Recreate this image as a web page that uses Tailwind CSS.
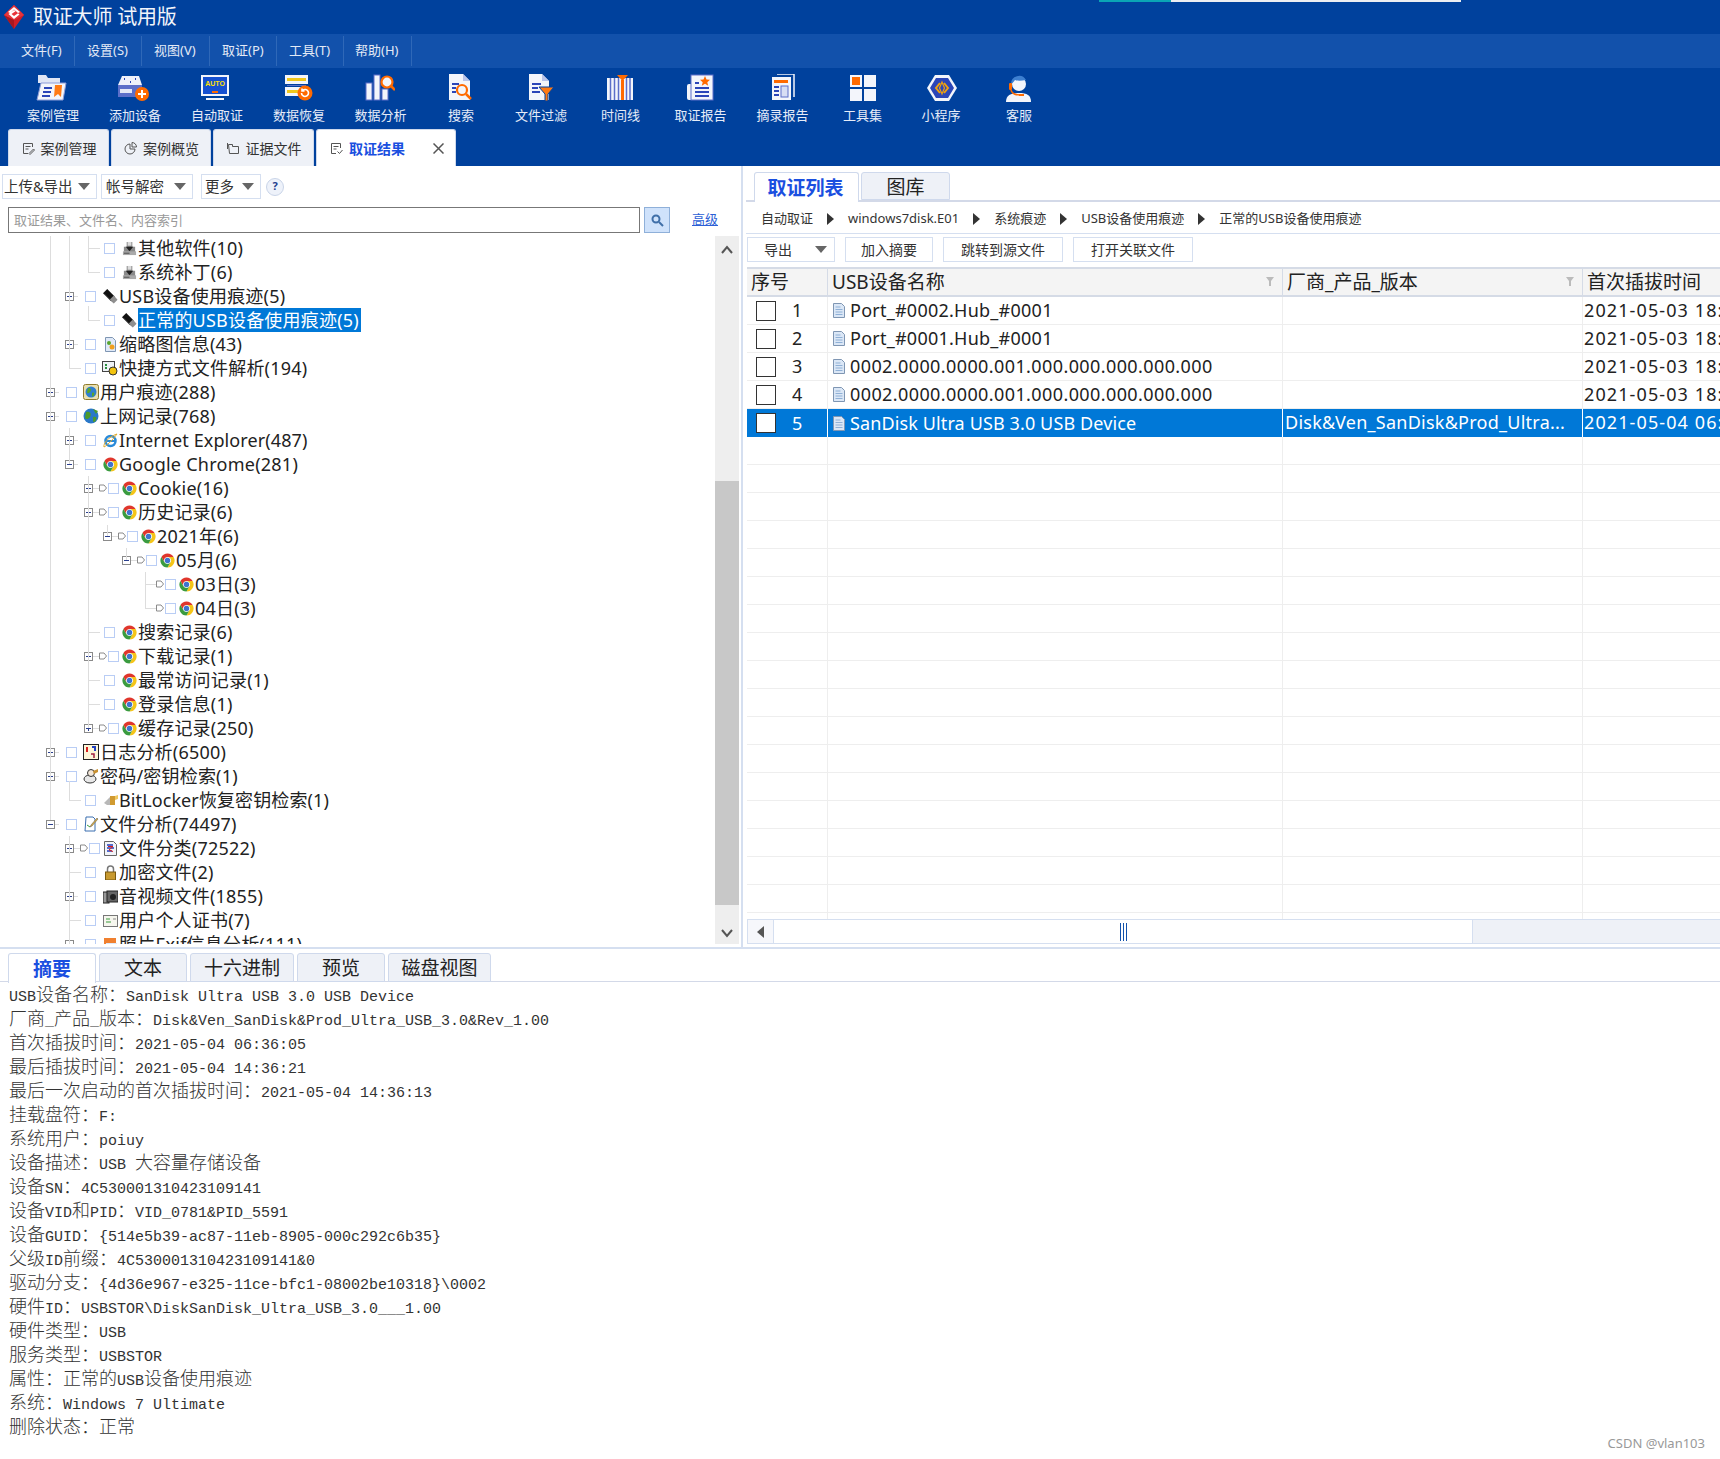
<!DOCTYPE html>
<html lang="zh"><head><meta charset="utf-8"><title>取证大师</title>
<script src="https://cdn.jsdelivr.net/npm/@tailwindcss/browser@4"></script></head>
<body class="bg-white">
<svg class="hidden">
<symbol id="p" viewBox="0 0 9 9"><rect x=".5" y=".5" width="8" height="8" fill="#fff" stroke="#8a8a8a"/><path d="M2 4.500h5M4.500 2v5" stroke="#2a3f8f"/></symbol>
<symbol id="m" viewBox="0 0 9 9"><rect x=".5" y=".5" width="8" height="8" fill="#fff" stroke="#8a8a8a"/><path d="M2 4.500h5" stroke="#2a3f8f"/></symbol>
<symbol id="t" viewBox="0 0 8 8"><path d="M.5 1h4.500l2.500 3-2.500 3H.5z" fill="#fff" stroke="#8a8a8a"/></symbol>
<symbol id="c" viewBox="0 0 16 16"><circle cx="8" cy="8" r="7.500" fill="#fff"/><path d="M1.500 4.200A7.500 7.500 0 0 1 14.500 4.200H8A3.800 3.800 0 0 0 4.700 9.900Z" fill="#e0362c"/><path d="M8 4.200H14.500A7.500 7.500 0 0 1 8 15.500L11.300 9.900A3.800 3.800 0 0 0 8 4.200Z" fill="#f5c518"/><path d="M1.500 4.200L4.700 9.900A3.800 3.800 0 0 0 11.300 9.900L8 15.500A7.500 7.500 0 0 1 1.500 4.200Z" fill="#3a9b3f"/><circle cx="8" cy="8" r="2.900" fill="#3f74cf"/></symbol>
<symbol id="u" viewBox="0 0 16 16"><path d="M0 4.500L4.500 0l8 8L8 12.500z" fill="#111"/><path d="M11.500 7l4 4.500-4 4-4.500-4z" fill="#8f8f8f"/><path d="M1 5l8 8" stroke="#666"/></symbol>
<symbol id="b" viewBox="0 0 16 16"><path d="M2 6h3V1h6v5h3v9H2z" fill="#8a8a8a"/><path d="M4 6h8l-4 5z" fill="#222"/><path d="M1 11h14v4H1z" fill="#aaa"/><path d="M6 1h4v4H6z" fill="#dcdcdc"/><path d="M2 13h6" stroke="#444"/></symbol>
<symbol id="d" viewBox="0 0 12 15"><path d="M.5.500h8l3 3v11H.5z" fill="#dbe7f6" stroke="#7f96b3"/><path d="M2.500 4h5M2.500 6.500h7M2.500 9h7M2.500 11.500h7" stroke="#8fb0d6"/></symbol>
</svg>
<div class="w-[1720px] h-[1459px] overflow-hidden relative flex flex-col font-['Noto_Sans','Noto_Sans_CJK_SC',sans-serif] text-[#222]">

<!-- title -->
<div class="h-[34px] bg-[#00419d] flex items-center relative shrink-0">
  <svg class="ml-[3px] w-[22px] h-[26px]" viewBox="0 0 22 26"><path d="M11 1l10 10-10 14L1 11z" fill="#d01f28"/><path d="M1 11l10 14V15z" fill="#a81820"/><path d="M11 1l10 10-10 5L1 11z" fill="#e8343a"/><path d="M11 3l6 5-2 1-4-3.500L7 9l-2-1zM5.500 10l5.500-4 1.500 1.200L8.500 10l2.500 2 4-2.800 1.500 1.200L11 15z" fill="#fff"/></svg>
  <span class="ml-[8px] text-[20px] text-[#f2f5fb] tracking-[-.2px]">取证大师 试用版</span>
  <div class="absolute left-[1099px] top-0 w-[72px] h-[2px] bg-[#0aa5b5]"></div>
  <div class="absolute left-[1171px] top-0 w-[290px] h-[2px] bg-[#eceef2]"></div>
</div>
<!-- menu -->
<div class="h-[34px] bg-[#1251ab] flex items-center text-[13px] text-[#e3eaf6] shrink-0">
  <div class="w-[75px] pl-[21px] h-[30px] leading-[28px] border-r border-[#2f68b8]">文件(F)</div>
  <div class="w-[67px] pl-[12px] h-[30px] leading-[28px] border-r border-[#2f68b8]">设置(S)</div>
  <div class="w-[68px] pl-[12px] h-[30px] leading-[28px] border-r border-[#2f68b8]">视图(V)</div>
  <div class="w-[67px] pl-[12px] h-[30px] leading-[28px] border-r border-[#2f68b8]">取证(P)</div>
  <div class="w-[67px] pl-[12px] h-[30px] leading-[28px] border-r border-[#2f68b8]">工具(T)</div>
  <div class="w-[68px] pl-[11px] h-[30px] leading-[28px] border-r border-[#2f68b8]">帮助(H)</div>
</div>
<!-- toolbar -->
<div class="h-[61px] bg-[#00419d] flex pl-[12px] text-[13px] text-[#e6ecf8] shrink-0">
  <div class="w-[82px] flex flex-col items-center pt-[6px]"><svg class="mr-[4px] w-[32px] h-[28px]" viewBox="0 0 32 28"><path d="M3 1h8l2 3h12v5H3z" fill="#dfe5f5"/><path d="M6 9h25l-3 17H2z" fill="#f3f5fb" stroke="#8e9dd8"/><path d="M9 14h8M8 18h8M7 22h8" stroke="#2b45b8" stroke-width="2"/><path d="M20 11h7l-1 12-3-3-4 3z" fill="#ff7a14"/></svg><span class="mt-[4px] leading-[18px]">案例管理</span></div>
  <div class="w-[82px] flex flex-col items-center pt-[6px]"><svg class="mr-[4px] w-[32px] h-[28px]" viewBox="0 0 32 28"><path d="M5 2h17l3 9H1z" fill="#eef1fa"/><path d="M7 5h1M18 5h1M13 8h1" stroke="#2b45b8" stroke-width="2"/><rect x="1" y="11" width="24" height="12" fill="#5c6fc9"/><rect x="3" y="15" width="12" height="4" fill="#e4e8f6"/><circle cx="25" cy="20" r="7" fill="#ff6a00"/><path d="M25 16v8M21 20h8" stroke="#fff" stroke-width="2"/></svg><span class="mt-[4px] leading-[18px]">添加设备</span></div>
  <div class="w-[82px] flex flex-col items-center pt-[6px]"><svg class="mr-[4px] w-[32px] h-[28px]" viewBox="0 0 32 28"><rect x="2" y="1" width="28" height="21" fill="#f3f5fb"/><rect x="4" y="3" width="24" height="17" fill="#1550d0"/><text x="16" y="12" font-size="7" font-weight="700" text-anchor="middle" fill="#ffe100" font-family="Liberation Sans">AUTO</text><rect x="13" y="17" width="6" height="2" fill="#ff6a00"/><rect x="7" y="24" width="18" height="2" fill="#f3f5fb"/></svg><span class="mt-[4px] leading-[18px]">自动取证</span></div>
  <div class="w-[82px] flex flex-col items-center pt-[6px]"><svg class="mr-[4px] w-[32px] h-[28px]" viewBox="0 0 32 28"><rect x="4" y="1" width="23" height="9" fill="#f3f5fb"/><rect x="6" y="4" width="19" height="3" fill="#f0c81c"/><rect x="4" y="13" width="21" height="9" fill="#f3f5fb"/><rect x="6" y="16" width="13" height="3" fill="#f0c81c"/><path d="M6 11.500h19" stroke="#5c6fc9"/><circle cx="24" cy="19" r="7.500" fill="#ff6a00"/><path d="M20.500 19a3.500 3.500 0 1 0 1.200-2.700M21 14.500v2.500h2.500" fill="none" stroke="#fff" stroke-width="1.600"/></svg><span class="mt-[4px] leading-[18px]">数据恢复</span></div>
  <div class="w-[81px] flex flex-col items-center pt-[6px]"><svg class="mr-[4px] w-[32px] h-[28px]" viewBox="0 0 32 28"><rect x="3" y="9" width="6" height="17" fill="#f3f5fb" stroke="#5c6fc9"/><rect x="11" y="1" width="6" height="25" fill="#f3f5fb" stroke="#5c6fc9"/><rect x="19" y="15" width="6" height="11" fill="#f3f5fb" stroke="#5c6fc9"/><circle cx="24" cy="8" r="5.500" fill="#f3f5fb" stroke="#ff6a00" stroke-width="2.200"/><path d="M28 12l4 4" stroke="#ff6a00" stroke-width="2.500"/></svg><span class="mt-[4px] leading-[18px]">数据分析</span></div>
  <div class="w-[80px] flex flex-col items-center pt-[6px]"><svg class="w-[32px] h-[28px]" viewBox="0 0 32 28"><path d="M4 0h14l7 7v19H4z" fill="#f3f5fb"/><path d="M18 0v7h7" fill="#b9c4ea"/><path d="M7 10h7M7 14h4M7 18h4" stroke="#2b45b8" stroke-width="2"/><circle cx="17" cy="16" r="5" fill="#f3f5fb" stroke="#ff6a00" stroke-width="2.200"/><path d="M21 20l5 5" stroke="#ff6a00" stroke-width="2.500"/></svg><span class="mt-[4px] leading-[18px]">搜索</span></div>
  <div class="w-[80px] flex flex-col items-center pt-[6px]"><svg class="w-[32px] h-[28px]" viewBox="0 0 32 28"><path d="M4 0h13l7 7v19H4z" fill="#f3f5fb"/><path d="M17 0v7h7" fill="#b9c4ea"/><path d="M7 10h9M7 14h6M7 18h8" stroke="#2b45b8" stroke-width="2"/><path d="M14 13h15l-6 7v7h-3v-7z" fill="#ff7a14" stroke="#00419d"/></svg><span class="mt-[4px] leading-[18px]">文件过滤</span></div>
  <div class="w-[79px] flex flex-col items-center pt-[6px]"><svg class="mr-[2px] w-[32px] h-[28px]" viewBox="0 0 32 28"><rect x="3" y="4" width="26" height="22" fill="#f3f5fb"/><path d="M6.500 4v22M10.500 4v22M14.500 4v22M22.500 4v22M26 4v22" stroke="#5c6fc9" stroke-width="1.500"/><rect x="17" y="6" width="3" height="20" fill="#ff6a00"/><path d="M13 1h11l-5.500 6z" fill="#ff6a00"/></svg><span class="mt-[4px] leading-[18px]">时间线</span></div>
  <div class="w-[81px] flex flex-col items-center pt-[6px]"><svg class="mr-[2px] w-[32px] h-[28px]" viewBox="0 0 32 28"><rect x="3" y="10" width="6" height="16" rx="2" fill="#f3f5fb"/><rect x="7" y="1" width="22" height="25" fill="#f3f5fb" stroke="#5c6fc9"/><path d="M11 9h4M11 14h14M11 18h14M11 22h14" stroke="#2b45b8" stroke-width="2"/><path d="M21 2l1.500 3.500 3.500.3-2.700 2.400.9 3.500-3.200-2-3.200 2 .9-3.500L16 5.800l3.500-.3z" fill="#ff6a00"/></svg><span class="mt-[4px] leading-[18px]">取证报告</span></div>
  <div class="w-[81px] flex flex-col items-center pt-[6px] pl-[2px]"><svg class="w-[32px] h-[28px]" viewBox="0 0 32 28"><path d="M10 0h17v23" fill="none" stroke="#f3f5fb" stroke-width="1.500"/><rect x="5" y="3" width="19" height="23" fill="#f3f5fb"/><rect x="7" y="6" width="14" height="3" fill="#ff6a00"/><path d="M7 13h5M7 17h5M7 21h5" stroke="#2b45b8" stroke-width="2"/><rect x="14" y="12" width="7" height="11" fill="#d8def4" stroke="#5c6fc9"/></svg><span class="mt-[4px] leading-[18px]">摘录报告</span></div>
  <div class="w-[79px] flex flex-col items-center pt-[6px] pl-[2px]"><svg class="w-[32px] h-[28px]" viewBox="0 0 32 28"><rect x="3" y="1" width="12" height="12" fill="#f3f5fb"/><rect x="5" y="3" width="8" height="8" fill="#ff6a00"/><rect x="17" y="1" width="12" height="12" fill="#f3f5fb"/><rect x="3" y="15" width="12" height="12" fill="#f3f5fb"/><rect x="17" y="15" width="12" height="12" fill="#f3f5fb"/></svg><span class="mt-[4px] leading-[18px]">工具集</span></div>
  <div class="w-[78px] flex flex-col items-center pt-[6px] pl-[2px]"><svg class="ml-[2px] w-[32px] h-[28px]" viewBox="0 0 32 28"><path d="M9 1h14l8 13-8 13H9L1 14z" fill="#f3f5fb"/><path d="M10 4h12l6 10-6 10H10L4 14z" fill="#2b45b8"/><path d="M14 9l-4 5 4 5M18 9l4 5-4 5" fill="none" stroke="#f0a010" stroke-width="2"/><path d="M16 8l-2.500 6 2.500 6 2.500-6z" fill="none" stroke="#f0a010" stroke-width="1.200"/></svg><span class="mt-[4px] leading-[18px]">小程序</span></div>
  <div class="w-[78px] flex flex-col items-center pt-[6px] pl-[2px]"><svg class="w-[32px] h-[28px]" viewBox="0 0 32 28"><path d="M3 28c0-7 5-9 13-9s12 2 12 9z" fill="#f3f5fb"/><circle cx="16" cy="10" r="7" fill="#f3f5fb"/><path d="M8 10a8 8 0 0 1 15-4c-5 1-9 1-11 0-1 2-3 3-4 4z" fill="#3d7fd0"/><rect x="6" y="9" width="3" height="7" rx="1" fill="#ff6a00"/><path d="M8 16c1 4 4 5 9 5" fill="none" stroke="#ff6a00" stroke-width="1.500"/><rect x="16" y="20" width="5" height="2" fill="#ff6a00"/></svg><span class="mt-[4px] leading-[18px]">客服</span></div>
</div>
<!-- tabs -->
<div class="h-[37px] bg-[#00419d] flex items-end pl-[8px] gap-[2px] text-[14px] shrink-0">
  <div class="w-[101px] h-[37px] rounded-t-[3px] bg-[#eef1f7] border border-b-0 border-[#cfd9ec] flex items-center justify-center gap-[6px] pl-[1px] text-[#333]"><svg class="w-[13px] h-[13px]" viewBox="0 0 13 13" fill="none" stroke="#555"><path d="M10.500 5V1.500h-9v10H6M3.500 4.500h5M3.500 7h3M7 11.500l4.500-4.500 1 1L8 12.500z"/></svg>案例管理</div>
  <div class="w-[100px] h-[37px] rounded-t-[3px] bg-[#eef1f7] border border-b-0 border-[#cfd9ec] flex items-center justify-center gap-[6px] pl-[1px] text-[#333]"><svg class="w-[13px] h-[13px]" viewBox="0 0 13 13" fill="none" stroke="#555"><path d="M6 2a5 5 0 1 0 5 5H6zM8 .5a4.500 4.500 0 0 1 4.500 4.500H8z"/></svg>案例概览</div>
  <div class="w-[101px] h-[37px] rounded-t-[3px] bg-[#eef1f7] border border-b-0 border-[#cfd9ec] flex items-center justify-center gap-[6px] pl-[1px] text-[#333]"><svg class="w-[13px] h-[13px]" viewBox="0 0 13 13" fill="none" stroke="#555"><path d="M1.500 2.500h4v2h6v7h-9zM.5 1v6"/></svg>证据文件</div>
  <div class="w-[140px] h-[37px] rounded-t-[3px] bg-white border border-b-0 border-[#cfd9ec] flex items-center pl-[13px] gap-[6px] text-[#1a4fe0] font-bold relative"><svg class="w-[13px] h-[13px]" viewBox="0 0 13 13" fill="none" stroke="#555"><path d="M10.500 6V1.500h-9v10H6M3.500 4.500h5M3.500 7h3M7.500 9.500l2 2 3-3.500"/></svg>取证结果<svg class="absolute left-[116px] top-[13px] w-[11px] h-[11px]" viewBox="0 0 11 11" stroke="#555" stroke-width="1.500"><path d="M.5.500l10 10M10.500.500l-10 10"/></svg></div>
</div>

<!-- main -->
<div class="flex h-[781px] shrink-0">
  <!-- left -->
  <div class="w-[741px] flex flex-col shrink-0">
    <div class="h-[70px] shrink-0 pt-[8px] text-[13px] text-[#333]">
      <div class="flex items-center h-[25px] pl-[2px]">
        <div class="w-[95px] h-[25px] border border-[#d5dff0] flex items-center text-[14.500px] pl-[1px]">上传&amp;导出<i class="ml-[5px] border-x-[6px] border-x-transparent border-t-[7px] border-t-[#666]"></i></div>
        <div class="ml-[4px] w-[92px] h-[25px] border border-[#d5dff0] flex items-center text-[14.500px] pl-[4px]">帐号解密<i class="ml-[10px] border-x-[6px] border-x-transparent border-t-[7px] border-t-[#666]"></i></div>
        <div class="ml-[8px] w-[60px] h-[25px] border border-[#d5dff0] flex items-center text-[14.500px] pl-[3px]">更多<i class="ml-[8px] border-x-[6px] border-x-transparent border-t-[7px] border-t-[#666]"></i></div>
        <div class="ml-[5px] w-[18px] h-[18px] rounded-full bg-[#eef2fa] border border-[#c9d4e8] flex items-center justify-center text-[11px] font-bold text-[#23408f]">?</div>
      </div>
      <div class="flex items-center mt-[8px] pl-[8px]">
        <div class="w-[632px] h-[26px] border border-[#777] px-[5px] leading-[24px] text-[#999] text-[13px]">取证结果、文件名、内容索引</div>
        <div class="ml-[4px] w-[26px] h-[26px] bg-[#cfe2fb] border border-[#8fb0d9] flex items-center justify-center"><svg class="w-[13px] h-[13px]" viewBox="0 0 13 13" fill="none" stroke="#3f6fa8" stroke-width="2"><circle cx="5" cy="5" r="3.500"/><path d="M8 8l4 4"/></svg></div>
        <div class="ml-[22px] text-[#2c5fd6] underline text-[13px]">高级</div>
      </div>
    </div>
    <div class="flex flex-1 min-h-0 pb-[3px]">
      <div class="w-[715px] relative overflow-hidden text-[18px] leading-[24px] whitespace-nowrap tracking-[.2px]">
        <!-- guide lines -->
        <div class="absolute left-[50px] top-0 w-px h-[584px] bg-[#ddd]"></div>
        <div class="absolute left-[69px] top-0 w-px h-[132px] bg-[#ddd]"></div>
        <div class="absolute left-[69px] top-[192px] w-px h-[36px] bg-[#ddd]"></div>
        <div class="absolute left-[69px] top-[545px] w-px h-[19px] bg-[#ddd]"></div>
        <div class="absolute left-[69px] top-[600px] w-px h-[108px] bg-[#ddd]"></div>
        <div class="absolute left-[88px] top-0 w-px h-[36px] bg-[#ddd]"></div>
        <div class="absolute left-[88px] top-[70px] w-px h-[14px] bg-[#ddd]"></div>
        <div class="absolute left-[88px] top-[240px] w-px h-[252px] bg-[#ddd]"></div>
        <div class="absolute left-[107px] top-[289px] w-px h-[11px] bg-[#ddd]"></div>
        <div class="absolute left-[126px] top-[312px] w-px h-[12px] bg-[#ddd]"></div>
        <div class="absolute left-[145px] top-[336px] w-px h-[36px] bg-[#ddd]"></div>

        <div class="h-6 flex items-center pl-[84px]"><i class="ml-[4px] mr-[4px] w-[12px] h-px bg-[#ddd]"></i><i class="w-[11px] h-[11px] border border-[#b9cdf5]"></i><svg class="ml-[7px] w-[15px] h-[15px]"><use href="#b"/></svg><span class="ml-[1px]">其他软件(10)</span></div>
        <div class="h-6 flex items-center pl-[84px]"><i class="ml-[4px] mr-[4px] w-[12px] h-px bg-[#ddd]"></i><i class="w-[11px] h-[11px] border border-[#b9cdf5]"></i><svg class="ml-[7px] w-[15px] h-[15px]"><use href="#b"/></svg><span class="ml-[1px]">系统补丁(6)</span></div>
        <div class="h-6 flex items-center pl-[65px]"><svg class="w-[9px] h-[9px]"><use href="#m"/></svg><i class="w-[4px] mr-[7px] h-px bg-[#ddd]"></i><i class="w-[11px] h-[11px] border border-[#b9cdf5]"></i><svg class="ml-[7px] w-[15px] h-[15px]"><use href="#u"/></svg><span class="ml-[1px]">USB设备使用痕迹(5)</span></div>
        <div class="h-6 flex items-center pl-[84px]"><i class="ml-[4px] mr-[4px] w-[12px] h-px bg-[#ddd]"></i><i class="w-[11px] h-[11px] border border-[#b9cdf5]"></i><svg class="ml-[7px] w-[15px] h-[15px]"><use href="#u"/></svg><span class="ml-[1px] bg-[#0078d7] text-white w-[223px] h-[24px]">正常的USB设备使用痕迹(5)</span></div>
        <div class="h-6 flex items-center pl-[65px]"><svg class="w-[9px] h-[9px]"><use href="#p"/></svg><i class="w-[4px] mr-[7px] h-px bg-[#ddd]"></i><i class="w-[11px] h-[11px] border border-[#b9cdf5]"></i><svg class="ml-[7px] w-[15px] h-[15px]" viewBox="0 0 15 15"><path d="M2.500.500h7l3 3v11h-10z" fill="#dfe9f8" stroke="#7f96b3"/><circle cx="6" cy="6" r="2" fill="#58a52c"/><circle cx="9" cy="10" r="2.500" fill="#f0a020"/></svg><span class="ml-[1px]">缩略图信息(43)</span></div>
        <div class="h-6 flex items-center pl-[65px]"><i class="ml-[4px] mr-[4px] w-[12px] h-px bg-[#ddd]"></i><i class="w-[11px] h-[11px] border border-[#b9cdf5]"></i><svg class="ml-[6px] w-[16px] h-[16px]" viewBox="0 0 16 16"><rect x=".5" y="1.500" width="12" height="10" fill="#eef2f6" stroke="#444"/><path d="M3 5h2M3 8h2" stroke="#2a8f40" stroke-width="2"/><circle cx="11" cy="11" r="4" fill="#f2c40f" stroke="#333"/></svg><span class="ml-[1px]">快捷方式文件解析(194)</span></div>
        <div class="h-6 flex items-center pl-[46px]"><svg class="w-[9px] h-[9px]"><use href="#p"/></svg><i class="w-[4px] mr-[7px] h-px bg-[#ddd]"></i><i class="w-[11px] h-[11px] border border-[#b9cdf5]"></i><svg class="ml-[6px] w-[16px] h-[16px]" viewBox="0 0 16 16"><rect x=".5" y=".5" width="15" height="15" rx="2" fill="#e9dfb0" stroke="#8f7a2c"/><circle cx="8" cy="8" r="5.500" fill="#2f7fd0"/><path d="M5 4c3 0 4 2 2 4s-3 1-3 0zM9 9c2-1 3 0 2 2s-2 2-2 1z" fill="#58a52c"/></svg><span class="ml-[1px]">用户痕迹(288)</span></div>
        <div class="h-6 flex items-center pl-[46px]"><svg class="w-[9px] h-[9px]"><use href="#m"/></svg><i class="w-[4px] mr-[7px] h-px bg-[#ddd]"></i><i class="w-[11px] h-[11px] border border-[#b9cdf5]"></i><svg class="ml-[6px] w-[16px] h-[16px]" viewBox="0 0 16 16"><circle cx="8" cy="8" r="7.500" fill="#2a78c8"/><path d="M3 4c4-1 6 2 4 5s-4 2-5 1zM10 9c3-1 4 0 3 3s-3 2-3 1zM10 1l5 2-2 3z" fill="#4d9a2c"/></svg><span class="ml-[1px]">上网记录(768)</span></div>
        <div class="h-6 flex items-center pl-[65px]"><svg class="w-[9px] h-[9px]"><use href="#p"/></svg><i class="w-[4px] mr-[7px] h-px bg-[#ddd]"></i><i class="w-[11px] h-[11px] border border-[#b9cdf5]"></i><svg class="ml-[7px] w-[15px] h-[15px]" viewBox="0 0 15 15"><circle cx="7.500" cy="8" r="5" fill="none" stroke="#2a8ad8" stroke-width="2.500"/><path d="M3 8h9" stroke="#2a8ad8" stroke-width="2"/><path d="M1 14c-1-3 4-10 13-13-3 4-9 11-13 13z" fill="none" stroke="#e2a92a"/></svg><span class="ml-[1px] tracking-[.1px]">Internet Explorer(487)</span></div>
        <div class="h-6 flex items-center pl-[65px]"><svg class="w-[9px] h-[9px]"><use href="#m"/></svg><i class="w-[4px] mr-[7px] h-px bg-[#ddd]"></i><i class="w-[11px] h-[11px] border border-[#b9cdf5]"></i><svg class="ml-[7px] w-[15px] h-[15px]"><use href="#c"/></svg><span class="ml-[1px] tracking-[.25px]">Google Chrome(281)</span></div>
        <div class="h-6 flex items-center pl-[84px]"><svg class="w-[9px] h-[9px]"><use href="#p"/></svg><i class="w-[6px] h-px bg-[#ddd]"></i><svg class="w-[8px] h-[8px]"><use href="#t"/></svg><i class="ml-[1px] w-[11px] h-[11px] border border-[#b9cdf5]"></i><svg class="ml-[3px] w-[15px] h-[15px]"><use href="#c"/></svg><span class="ml-[1px]">Cookie(16)</span></div>
        <div class="h-6 flex items-center pl-[84px]"><svg class="w-[9px] h-[9px]"><use href="#m"/></svg><i class="w-[6px] h-px bg-[#ddd]"></i><svg class="w-[8px] h-[8px]"><use href="#t"/></svg><i class="ml-[1px] w-[11px] h-[11px] border border-[#b9cdf5]"></i><svg class="ml-[3px] w-[15px] h-[15px]"><use href="#c"/></svg><span class="ml-[1px]">历史记录(6)</span></div>
        <div class="h-6 flex items-center pl-[103px]"><svg class="w-[9px] h-[9px]"><use href="#m"/></svg><i class="w-[6px] h-px bg-[#ddd]"></i><svg class="w-[8px] h-[8px]"><use href="#t"/></svg><i class="ml-[1px] w-[11px] h-[11px] border border-[#b9cdf5]"></i><svg class="ml-[3px] w-[15px] h-[15px]"><use href="#c"/></svg><span class="ml-[1px]">2021年(6)</span></div>
        <div class="h-6 flex items-center pl-[122px]"><svg class="w-[9px] h-[9px]"><use href="#m"/></svg><i class="w-[6px] h-px bg-[#ddd]"></i><svg class="w-[8px] h-[8px]"><use href="#t"/></svg><i class="ml-[1px] w-[11px] h-[11px] border border-[#b9cdf5]"></i><svg class="ml-[3px] w-[15px] h-[15px]"><use href="#c"/></svg><span class="ml-[1px]">05月(6)</span></div>
        <div class="h-6 flex items-center pl-[141px]"><i class="ml-[4px] w-[11px] h-px bg-[#ddd]"></i><svg class="w-[8px] h-[8px]"><use href="#t"/></svg><i class="ml-[1px] w-[11px] h-[11px] border border-[#b9cdf5]"></i><svg class="ml-[3px] w-[15px] h-[15px]"><use href="#c"/></svg><span class="ml-[1px]">03日(3)</span></div>
        <div class="h-6 flex items-center pl-[141px]"><i class="ml-[4px] w-[11px] h-px bg-[#ddd]"></i><svg class="w-[8px] h-[8px]"><use href="#t"/></svg><i class="ml-[1px] w-[11px] h-[11px] border border-[#b9cdf5]"></i><svg class="ml-[3px] w-[15px] h-[15px]"><use href="#c"/></svg><span class="ml-[1px]">04日(3)</span></div>
        <div class="h-6 flex items-center pl-[84px]"><i class="ml-[4px] mr-[4px] w-[12px] h-px bg-[#ddd]"></i><i class="w-[11px] h-[11px] border border-[#b9cdf5]"></i><svg class="ml-[7px] w-[15px] h-[15px]"><use href="#c"/></svg><span class="ml-[1px]">搜索记录(6)</span></div>
        <div class="h-6 flex items-center pl-[84px]"><svg class="w-[9px] h-[9px]"><use href="#p"/></svg><i class="w-[6px] h-px bg-[#ddd]"></i><svg class="w-[8px] h-[8px]"><use href="#t"/></svg><i class="ml-[1px] w-[11px] h-[11px] border border-[#b9cdf5]"></i><svg class="ml-[3px] w-[15px] h-[15px]"><use href="#c"/></svg><span class="ml-[1px]">下载记录(1)</span></div>
        <div class="h-6 flex items-center pl-[84px]"><i class="ml-[4px] mr-[4px] w-[12px] h-px bg-[#ddd]"></i><i class="w-[11px] h-[11px] border border-[#b9cdf5]"></i><svg class="ml-[7px] w-[15px] h-[15px]"><use href="#c"/></svg><span class="ml-[1px]">最常访问记录(1)</span></div>
        <div class="h-6 flex items-center pl-[84px]"><i class="ml-[4px] mr-[4px] w-[12px] h-px bg-[#ddd]"></i><i class="w-[11px] h-[11px] border border-[#b9cdf5]"></i><svg class="ml-[7px] w-[15px] h-[15px]"><use href="#c"/></svg><span class="ml-[1px]">登录信息(1)</span></div>
        <div class="h-6 flex items-center pl-[84px]"><svg class="w-[9px] h-[9px]"><use href="#p"/></svg><i class="w-[6px] h-px bg-[#ddd]"></i><svg class="w-[8px] h-[8px]"><use href="#t"/></svg><i class="ml-[1px] w-[11px] h-[11px] border border-[#b9cdf5]"></i><svg class="ml-[3px] w-[15px] h-[15px]"><use href="#c"/></svg><span class="ml-[1px]">缓存记录(250)</span></div>
        <div class="h-6 flex items-center pl-[46px]"><svg class="w-[9px] h-[9px]"><use href="#p"/></svg><i class="w-[4px] mr-[7px] h-px bg-[#ddd]"></i><i class="w-[11px] h-[11px] border border-[#b9cdf5]"></i><svg class="ml-[6px] w-[16px] h-[16px]" viewBox="0 0 16 16"><rect x=".5" y=".5" width="15" height="15" fill="#fdf6d8" stroke="#222"/><path d="M4 3v5" stroke="#d82020" stroke-width="2"/><path d="M9 3h3v4" stroke="#2040c0" stroke-width="2" fill="none"/><path d="M8 10h3v4" stroke="#a02040" stroke-width="1.500" fill="none"/></svg><span class="ml-[1px]">日志分析(6500)</span></div>
        <div class="h-6 flex items-center pl-[46px]"><svg class="w-[9px] h-[9px]"><use href="#m"/></svg><i class="w-[4px] mr-[7px] h-px bg-[#ddd]"></i><i class="w-[11px] h-[11px] border border-[#b9cdf5]"></i><svg class="ml-[6px] w-[16px] h-[16px]" viewBox="0 0 16 16"><ellipse cx="7" cy="11" rx="6" ry="4" fill="#e8e8e8" stroke="#333"/><circle cx="8" cy="5" r="3.500" fill="#f2e6d8" stroke="#333"/><path d="M10 3l5-2v3l-4 2z" fill="#c89030"/></svg><span class="ml-[1px]">密码/密钥检索(1)</span></div>
        <div class="h-6 flex items-center pl-[65px]"><i class="ml-[4px] mr-[4px] w-[12px] h-px bg-[#ddd]"></i><i class="w-[11px] h-[11px] border border-[#b9cdf5]"></i><svg class="ml-[7px] w-[15px] h-[15px]" viewBox="0 0 15 15"><path d="M1 10l6-6 4 2v6H4z" fill="#b8b8b8"/><rect x="7" y="3" width="5" height="9" fill="#d09a30"/><path d="M12 3l3-1v4l-3 1z" fill="#efc860"/></svg><span class="ml-[1px] tracking-[.1px]">BitLocker恢复密钥检索(1)</span></div>
        <div class="h-6 flex items-center pl-[46px]"><svg class="w-[9px] h-[9px]"><use href="#m"/></svg><i class="w-[4px] mr-[7px] h-px bg-[#ddd]"></i><i class="w-[11px] h-[11px] border border-[#b9cdf5]"></i><svg class="ml-[6px] w-[16px] h-[16px]" viewBox="0 0 16 16"><path d="M3 1h7l2 2v12H2z" fill="#fff" stroke="#3a6fb0"/><path d="M14 2l-6 7-1 2 2-1 6-7z" fill="#e0b040" stroke="#555" stroke-width=".5"/><path d="M4 9l3 2" stroke="#3a9b3f"/></svg><span class="ml-[1px]">文件分析(74497)</span></div>
        <div class="h-6 flex items-center pl-[65px]"><svg class="w-[9px] h-[9px]"><use href="#p"/></svg><i class="w-[6px] h-px bg-[#ddd]"></i><svg class="w-[8px] h-[8px]"><use href="#t"/></svg><i class="ml-[1px] w-[11px] h-[11px] border border-[#b9cdf5]"></i><svg class="ml-[3px] w-[15px] h-[15px]" viewBox="0 0 15 15"><path d="M1.500.500h9l3 3v11h-12z" fill="#f2f4f8" stroke="#666"/><path d="M4 4h6M4 7h7M4 10h5" stroke="#2040c0" stroke-width="1.500"/><path d="M5 5.500h5L6 9l4 1.500" stroke="#d82020" fill="none"/></svg><span class="ml-[1px]">文件分类(72522)</span></div>
        <div class="h-6 flex items-center pl-[65px]"><i class="ml-[4px] mr-[4px] w-[12px] h-px bg-[#ddd]"></i><i class="w-[11px] h-[11px] border border-[#b9cdf5]"></i><svg class="ml-[7px] w-[15px] h-[15px]" viewBox="0 0 15 15"><path d="M4.500 7V4a3 3 0 0 1 6 0v3" fill="none" stroke="#777" stroke-width="1.500"/><rect x="2.500" y="7" width="10" height="8" fill="#c89a30" stroke="#7a5a10"/></svg><span class="ml-[1px]">加密文件(2)</span></div>
        <div class="h-6 flex items-center pl-[65px]"><svg class="w-[9px] h-[9px]"><use href="#p"/></svg><i class="w-[4px] mr-[7px] h-px bg-[#ddd]"></i><i class="w-[11px] h-[11px] border border-[#b9cdf5]"></i><svg class="ml-[7px] w-[15px] h-[15px]" viewBox="0 0 15 15"><rect x="0" y="3" width="6" height="11" fill="#999" stroke="#222"/><rect x="4" y="2" width="11" height="11" fill="#666" stroke="#222"/><circle cx="10" cy="8" r="3" fill="#222"/></svg><span class="ml-[1px]">音视频文件(1855)</span></div>
        <div class="h-6 flex items-center pl-[65px]"><i class="ml-[4px] mr-[4px] w-[12px] h-px bg-[#ddd]"></i><i class="w-[11px] h-[11px] border border-[#b9cdf5]"></i><svg class="ml-[7px] w-[15px] h-[15px]" viewBox="0 0 15 15"><rect x=".5" y="2.500" width="14" height="11" fill="#f6f6ee" stroke="#777"/><path d="M3 6h4M3 9h5" stroke="#3a9b3f"/><path d="M10 6h3" stroke="#888"/></svg><span class="ml-[1px]">用户个人证书(7)</span></div>
        <div class="h-6 flex items-center pl-[65px]"><svg class="w-[9px] h-[9px]"><use href="#p"/></svg><i class="w-[4px] mr-[7px] h-px bg-[#ddd]"></i><i class="w-[11px] h-[11px] border border-[#b9cdf5]"></i><svg class="ml-[7px] w-[15px] h-[15px]" viewBox="0 0 15 15"><rect x="1" y="1" width="12" height="6" fill="#f08030"/><rect x="3" y="6" width="11" height="8" fill="#dfe9f8"/></svg><span class="ml-[1px]">照片Exif信息分析(111)</span></div>
      </div>
      <div class="w-[24px] bg-[#eee] flex flex-col items-center">
        <svg class="mt-[9px] w-[12px] h-[10px]" viewBox="0 0 12 10" fill="none" stroke="#555" stroke-width="2"><path d="M1 8l5-6 5 6"/></svg>
        <div class="mt-[226px] w-full h-[424px] bg-[#c8c8c8]"></div>
        <svg class="mt-[23px] w-[12px] h-[10px]" viewBox="0 0 12 10" fill="none" stroke="#555" stroke-width="2"><path d="M1 2l5 6 5-6"/></svg>
      </div>
    </div>
  </div>
  <div class="w-[2px] bg-[#d5dff0] shrink-0"></div>
  <!-- right -->
  <div class="flex-1 min-w-0 pl-[3px] flex flex-col">
    <div class="h-[36px] pt-[6px] pl-[8px] flex gap-[2px] border-b-2 border-[#d3d9e8] shrink-0">
      <div class="w-[105px] h-[30px] rounded-t-[3px] border border-b-0 border-[#cfd9ec] bg-white text-[19px] font-bold text-[#1a4fe0] text-center leading-[30px] pr-[2px]">取证列表</div>
      <div class="w-[89px] h-[28px] rounded-t-[3px] border border-[#cfd9ec] bg-[#eef1f7] text-[19px] text-center leading-[28px]">图库</div>
    </div>
    <div class="h-[32px] border-b border-[#d5dff0] pt-[2px] flex items-center pl-[15px] text-[13px] text-[#333] shrink-0">
      <span>自动取证</span><i class="ml-[14px] mr-[14px] border-y-[6px] border-y-transparent border-l-[7px] border-l-[#333]"></i><span>windows7disk.E01</span><i class="ml-[14px] mr-[14px] border-y-[6px] border-y-transparent border-l-[7px] border-l-[#333]"></i><span>系统痕迹</span><i class="ml-[14px] mr-[14px] border-y-[6px] border-y-transparent border-l-[7px] border-l-[#333]"></i><span>USB设备使用痕迹</span><i class="ml-[14px] mr-[14px] border-y-[6px] border-y-transparent border-l-[7px] border-l-[#333]"></i><span>正常的USB设备使用痕迹</span>
    </div>
    <div class="h-[33px] pt-[3px] pl-[1px] flex gap-[10px] text-[14px] text-[#333] shrink-0">
      <div class="w-[88px] h-[25px] border border-[#d5dff0] flex items-center pl-[16px]">导出<i class="ml-[23px] border-x-[6px] border-x-transparent border-t-[7px] border-t-[#666]"></i></div>
      <div class="w-[88px] h-[25px] border border-[#d5dff0] flex items-center justify-center">加入摘要</div>
      <div class="w-[120px] h-[25px] border border-[#d5dff0] flex items-center justify-center">跳转到源文件</div>
      <div class="w-[120px] h-[25px] border border-[#d5dff0] flex items-center justify-center">打开关联文件</div>
    </div>
    <!-- table -->
    <div class="h-[30px] ml-[1px] grid grid-cols-[81px_455px_300px_1fr] bg-[#f4f4f4] border-y-2 border-[#d5dbe6] text-[19px] leading-[26px] whitespace-nowrap shrink-0">
      <div class="pl-[4px] border-r border-[#d5dbe6]">序号</div>
      <div class="pl-[4px] border-r border-[#d5dbe6] relative">USB设备名称<svg class="absolute right-[8px] top-[8px] w-[8px] h-[9px]" viewBox="0 0 8 9"><path d="M0 0h8L5 4v5H3V4z" fill="#bbb"/></svg></div>
      <div class="pl-[4px] border-r border-[#d5dbe6] relative">厂商_产品_版本<svg class="absolute right-[8px] top-[8px] w-[8px] h-[9px]" viewBox="0 0 8 9"><path d="M0 0h8L5 4v5H3V4z" fill="#bbb"/></svg></div>
      <div class="pl-[4px] overflow-hidden">首次插拔时间</div>
    </div>
    <div class="flex-1 min-h-0 ml-[1px] overflow-hidden text-[18px] whitespace-nowrap leading-[27px]">
      <div class="h-[28px] grid grid-cols-[81px_455px_300px_1fr] border-b border-[#eee]"><div class="flex items-center border-r border-[#eee]"><i class="ml-[9px] w-[20px] h-[20px] border border-[#333] bg-white"></i><span class="ml-[16px]">1</span></div><div class="flex items-center border-r border-[#eee] pl-[5px]"><svg class="w-[12px] h-[15px]"><use href="#d"/></svg><span class="ml-[5px] tracking-[.25px]">Port_#0002.Hub_#0001</span></div><div class="border-r border-[#eee]"></div><div class="pl-[1px] overflow-hidden tracking-[1.1px]">2021-05-03 18:20:14</div></div>
      <div class="h-[28px] grid grid-cols-[81px_455px_300px_1fr] border-b border-[#eee]"><div class="flex items-center border-r border-[#eee]"><i class="ml-[9px] w-[20px] h-[20px] border border-[#333] bg-white"></i><span class="ml-[16px]">2</span></div><div class="flex items-center border-r border-[#eee] pl-[5px]"><svg class="w-[12px] h-[15px]"><use href="#d"/></svg><span class="ml-[5px] tracking-[.25px]">Port_#0001.Hub_#0001</span></div><div class="border-r border-[#eee]"></div><div class="pl-[1px] overflow-hidden tracking-[1.1px]">2021-05-03 18:20:14</div></div>
      <div class="h-[28px] grid grid-cols-[81px_455px_300px_1fr] border-b border-[#eee]"><div class="flex items-center border-r border-[#eee]"><i class="ml-[9px] w-[20px] h-[20px] border border-[#333] bg-white"></i><span class="ml-[16px]">3</span></div><div class="flex items-center border-r border-[#eee] pl-[5px]"><svg class="w-[12px] h-[15px]"><use href="#d"/></svg><span class="ml-[5px] tracking-[.4px]">0002.0000.0000.001.000.000.000.000.000</span></div><div class="border-r border-[#eee]"></div><div class="pl-[1px] overflow-hidden tracking-[1.1px]">2021-05-03 18:20:14</div></div>
      <div class="h-[28px] grid grid-cols-[81px_455px_300px_1fr] border-b border-[#eee]"><div class="flex items-center border-r border-[#eee]"><i class="ml-[9px] w-[20px] h-[20px] border border-[#333] bg-white"></i><span class="ml-[16px]">4</span></div><div class="flex items-center border-r border-[#eee] pl-[5px]"><svg class="w-[12px] h-[15px]"><use href="#d"/></svg><span class="ml-[5px] tracking-[.4px]">0002.0000.0000.001.000.000.000.000.000</span></div><div class="border-r border-[#eee]"></div><div class="pl-[1px] overflow-hidden tracking-[1.1px]">2021-05-03 18:20:14</div></div>
      <div class="h-[28px] grid grid-cols-[81px_455px_300px_1fr] bg-[#0078d7] text-white"><div class="flex items-center border-r border-white"><i class="ml-[9px] w-[20px] h-[20px] border border-[#333] bg-white"></i><span class="ml-[16px]">5</span></div><div class="flex items-center border-r border-white pl-[5px]"><svg class="w-[12px] h-[15px]"><use href="#d"/></svg><span class="ml-[5px] tracking-[.12px]">SanDisk Ultra USB 3.0 USB Device</span></div><div class="border-r border-white pl-[2px] overflow-hidden tracking-[.25px]">Disk&amp;Ven_SanDisk&amp;Prod_Ultra...</div><div class="pl-[1px] overflow-hidden tracking-[1.1px]">2021-05-04 06:36:05</div></div>
      <div class="relative h-[483px] bg-[repeating-linear-gradient(to_bottom,transparent_0,transparent_27px,#eee_27px,#eee_28px)]">
        <div class="absolute left-[80px] top-0 bottom-0 w-px bg-[#eee]"></div>
        <div class="absolute left-[535px] top-0 bottom-0 w-px bg-[#eee]"></div>
        <div class="absolute left-[835px] top-0 bottom-0 w-px bg-[#eee]"></div>
      </div>
    </div>
    <div class="h-[25px] ml-[1px] mb-[3px] flex border-y border-[#d5dff0] bg-[#eef1f7] shrink-0">
      <div class="w-[27px] bg-[#f6f7fb] border-x border-[#d5dff0] flex items-center justify-center"><i class="border-y-[6px] border-y-transparent border-r-[7px] border-r-[#555]"></i></div>
      <div class="w-[699px] bg-white border-r border-[#d5dff0] flex items-center justify-center"><div class="w-[7px] h-[18px] border-x border-[#1251ab] flex justify-center"><i class="w-px h-full bg-[#1251ab]"></i></div></div>
    </div>
  </div>
</div>
<div class="h-[2px] bg-[#d5dff0] shrink-0"></div>

<!-- bottom -->
<div class="flex-1 min-h-0 relative">
  <div class="h-[33px] pt-[4px] pl-[8px] flex gap-[3px] text-[19px] border-b border-[#d3d9e8]">
    <div class="w-[88px] h-[30px] rounded-t-[3px] border border-b-0 border-[#cfd9ec] bg-white font-bold text-[#1a4fe0] text-center leading-[30px]">摘要</div>
    <div class="w-[88px] h-[29px] rounded-t-[3px] border border-[#cfd9ec] bg-[#eef1f7] text-center leading-[29px]">文本</div>
    <div class="w-[104px] h-[29px] rounded-t-[3px] border border-[#cfd9ec] bg-[#eef1f7] text-center leading-[29px]">十六进制</div>
    <div class="w-[88px] h-[29px] rounded-t-[3px] border border-[#cfd9ec] bg-[#eef1f7] text-center leading-[29px]">预览</div>
    <div class="w-[103px] h-[29px] rounded-t-[3px] border border-[#cfd9ec] bg-[#eef1f7] text-center leading-[29px]">磁盘视图</div>
  </div>
  <div class="pl-[9px] pt-[2px] font-['Liberation_Mono','Noto_Sans_CJK_SC',monospace] text-[15px] leading-[24px] whitespace-nowrap text-[#333] [&_b]:text-[18px] [&_b]:font-light">
    <div class="h-[24px]">USB<b>设备名称：</b>SanDisk Ultra USB 3.0 USB Device</div>
    <div class="h-[24px]"><b>厂商</b>_<b>产品</b>_<b>版本：</b>Disk&amp;Ven_SanDisk&amp;Prod_Ultra_USB_3.0&amp;Rev_1.00</div>
    <div class="h-[24px]"><b>首次插拔时间：</b>2021-05-04 06:36:05</div>
    <div class="h-[24px]"><b>最后插拔时间：</b>2021-05-04 14:36:21</div>
    <div class="h-[24px]"><b>最后一次启动的首次插拔时间：</b>2021-05-04 14:36:13</div>
    <div class="h-[24px]"><b>挂载盘符：</b>F:</div>
    <div class="h-[24px]"><b>系统用户：</b>poiuy</div>
    <div class="h-[24px]"><b>设备描述：</b>USB <b>大容量存储设备</b></div>
    <div class="h-[24px]"><b>设备</b>SN<b>：</b>4C530001310423109141</div>
    <div class="h-[24px]"><b>设备</b>VID<b>和</b>PID<b>：</b>VID_0781&amp;PID_5591</div>
    <div class="h-[24px]"><b>设备</b>GUID<b>：</b>{514e5b39-ac87-11eb-8905-000c292c6b35}</div>
    <div class="h-[24px]"><b>父级</b>ID<b>前缀：</b>4C530001310423109141&amp;0</div>
    <div class="h-[24px]"><b>驱动分支：</b>{4d36e967-e325-11ce-bfc1-08002be10318}\0002</div>
    <div class="h-[24px]"><b>硬件</b>ID<b>：</b>USBSTOR\DiskSanDisk_Ultra_USB_3.0___1.00</div>
    <div class="h-[24px]"><b>硬件类型：</b>USB</div>
    <div class="h-[24px]"><b>服务类型：</b>USBSTOR</div>
    <div class="h-[24px]"><b>属性：正常的</b>USB<b>设备使用痕迹</b></div>
    <div class="h-[24px]"><b>系统：</b>Windows 7 Ultimate</div>
    <div class="h-[24px]"><b>删除状态：正常</b></div>
  </div>
  <div class="absolute right-[15px] bottom-[6px] text-[13px] text-[#999]">CSDN @vlan103</div>
</div>
</div>
</body></html>
